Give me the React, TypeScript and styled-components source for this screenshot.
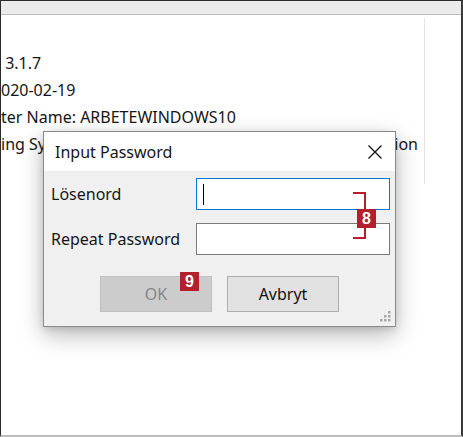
import React from 'react';
import styled, { createGlobalStyle } from 'styled-components';

const GlobalStyle = createGlobalStyle`
  html, body {
    margin: 0;
    padding: 0;
    background: #fff;
  }
  body {
    font-family: "Noto Sans", "Open Sans", sans-serif;
    color: #111;
  }
`;

const info = [' 3.1.7', '020-02-19', 'ter Name: ARBETEWINDOWS10'];

function App() {
    return (
        <>
            <GlobalStyle />
            <Frame>
                <TopStrip />
                <Content>
                    <InfoPanel>
                        {info.map((line) => (
                            <InfoLine key={line}>{line}</InfoLine>
                        ))}
                        <InfoLine>
                            <span>ing Sy</span>
                            <span>Edition</span>
                        </InfoLine>
                    </InfoPanel>
                    <Divider />
                </Content>

                <Dialog>
                    <TitleBar>
                        <Title>Input Password</Title>
                        <CloseButton aria-label='Close'>
                            <svg width='16' height='16' viewBox='0 0 16 16'>
                                <path d='M1.5 1.5 L14.5 14.5 M14.5 1.5 L1.5 14.5' stroke='#1a1a1a' strokeWidth='1.4' fill='none' />
                            </svg>
                        </CloseButton>
                    </TitleBar>
                    <Body>
                        <Field>
                            <Label>Lösenord</Label>
                            <Input $focused>
                                <Caret />
                            </Input>
                        </Field>
                        <Field>
                            <Label>Repeat Password</Label>
                            <Input />
                        </Field>
                        <Buttons>
                            <Button disabled>OK</Button>
                            <Button>Avbryt</Button>
                        </Buttons>
                        <Grip width='12' height='12' viewBox='0 0 12 12'>
                            {[
                                [8, 0],
                                [4, 4], [8, 4],
                                [0, 8], [4, 8], [8, 8],
                            ].map(([x, y]) => (
                                <rect key={`${x}-${y}`} x={x} y={y} width='2.5' height='2.5' fill='#a6a6a6' />
                            ))}
                        </Grip>
                    </Body>

                    <Bracket />
                    <Badge $x={313} $y={77}>8</Badge>
                    <Badge $x={136} $y={140}>9</Badge>
                </Dialog>
            </Frame>
        </>
    );
}

const Frame = styled.div`
    position: relative;
    width: 463px;
    height: 437px;
    box-sizing: border-box;
    border-top: 1px solid #2b2b2b;
    border-left: 1px solid #2b2b2b;
    border-right: 2px solid #3a3a3a;
    border-bottom: 2px solid #bdbdbd;
    background: #fff;
    overflow: hidden;
`;

const TopStrip = styled.div`
    height: 13px;
    background: #ebebeb;
    border-bottom: 1px solid #bcbcbc;
`;

const Content = styled.div`
    display: flex;
    align-items: flex-start;
`;

const InfoPanel = styled.div`
    width: 417px;
    padding: 35px 6px 0 0;
`;

const InfoLine = styled.div`
    display: flex;
    justify-content: space-between;
    height: 27px;
    line-height: 27px;
    font-size: 16px;
    white-space: pre;
    color: #161616;
`;

const Divider = styled.div`
    width: 1px;
    height: 166px;
    margin-top: 3px;
    background: #e3e3e3;
`;

const Dialog = styled.div`
    position: absolute;
    left: 42px;
    top: 130px;
    width: 353px;
    height: 196px;
    box-sizing: border-box;
    border: 1px solid #8a8a8a;
    background: #f0f0f0;
    box-shadow: 0 8px 22px rgba(0, 0, 0, 0.28), 0 2px 6px rgba(0, 0, 0, 0.12);
    display: flex;
    flex-direction: column;
`;

const TitleBar = styled.div`
    height: 39px;
    background: #fff;
    display: flex;
    align-items: center;
    justify-content: space-between;
    padding: 0 10px 0 11px;
`;

const Title = styled.span`
    font-size: 16px;
    color: #161616;
`;

const CloseButton = styled.span`
    display: flex;
    align-items: center;
    justify-content: center;
    width: 20px;
    height: 20px;
`;

const Body = styled.div`
    position: relative;
    flex: 1;
    padding: 7px 6px 0 7px;
    display: flex;
    flex-direction: column;
    gap: 13px;
`;

const Field = styled.div`
    display: grid;
    grid-template-columns: 145px 194px;
    align-items: center;
`;

const Label = styled.span`
    font-size: 16px;
    color: #161616;
`;

const Input = styled.div<{ $focused?: boolean }>`
    height: 32px;
    box-sizing: border-box;
    background: #fff;
    border: 1px solid ${(p) => (p.$focused ? '#0078d7' : '#7a7a7a')};
    display: flex;
    align-items: center;
    padding-left: 6px;
`;

const Caret = styled.span`
    width: 1px;
    height: 21px;
    background: #000;
`;

const Buttons = styled.div`
    display: flex;
    justify-content: center;
    gap: 15px;
    margin-top: 8px;
    padding-right: 1px;
`;

const Button = styled.button`
    width: 112px;
    height: 36px;
    font-family: inherit;
    font-size: 16px;
    border: 1px solid ${(p) => (p.disabled ? '#bfbfbf' : '#adadad')};
    background: ${(p) => (p.disabled ? '#cccccc' : '#e1e1e1')};
    color: ${(p) => (p.disabled ? '#858585' : '#111')};
    padding: 0;
`;

const Grip = styled.svg`
    position: absolute;
    right: 3px;
    bottom: 3px;
`;

const Bracket = styled.div`
    position: absolute;
    left: 309px;
    top: 60px;
    width: 13px;
    height: 47px;
    box-sizing: border-box;
    border: 2px solid #b41f2e;
    border-left: none;
`;

const Badge = styled.div<{ $x: number; $y: number }>`
    position: absolute;
    left: ${(p) => p.$x}px;
    top: ${(p) => p.$y}px;
    width: 19px;
    height: 19px;
    background: #b41f2e;
    color: #fff;
    font-family: "Liberation Sans", "Noto Sans", sans-serif;
    font-weight: 700;
    font-size: 16px;
    line-height: 19px;
    text-align: center;
`;

export default App;
